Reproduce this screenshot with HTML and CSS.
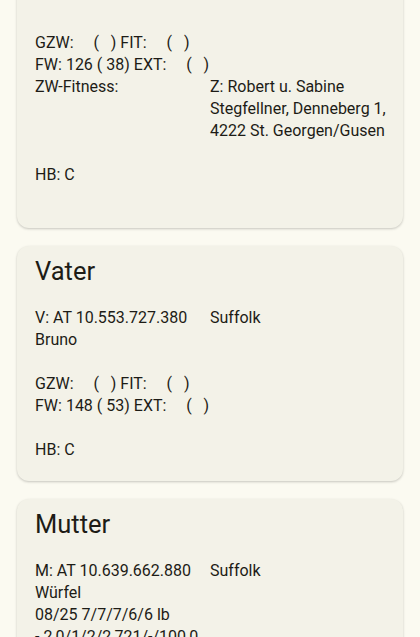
FILE: index.html
```html
<!DOCTYPE html>
<html lang="de">
<head>
  <meta charset="utf-8">
  <title>Tierdetails</title>
  <link rel="stylesheet" href="styles.css">
</head>
<body>

  <div class="list">

    <div class="card first">
      <div class="blank"></div>
      <div class="line">GZW:     (   ) FIT:     (   )</div>
      <div class="line">FW: 126 ( 38) EXT:     (   )</div>
      <div class="pair">
        <div class="line">ZW-Fitness:</div>
        <div class="wrap">Z: Robert u. Sabine Stegfellner, Denneberg 1, 4222 St. Georgen/Gusen</div>
      </div>
      <div class="blank"></div>
      <div class="line">HB: C</div>
      <div class="blank"></div>
    </div>

    <div class="card">
      <div class="title">Vater</div>
      <div class="pair">
        <div class="line">V: AT 10.553.727.380</div>
        <div class="line">Suffolk</div>
      </div>
      <div class="line">Bruno</div>
      <div class="blank"></div>
      <div class="line">GZW:     (   ) FIT:     (   )</div>
      <div class="line">FW: 148 ( 53) EXT:     (   )</div>
      <div class="blank"></div>
      <div class="line">HB: C</div>
    </div>

    <div class="card">
      <div class="title">Mutter</div>
      <div class="pair">
        <div class="line">M: AT 10.639.662.880</div>
        <div class="line">Suffolk</div>
      </div>
      <div class="line">Würfel</div>
      <div class="line">08/25 7/7/7/6/6 lb</div>
      <div class="line">- 2,0/1/2/2,721/-/100,0</div>
      <div class="blank"></div>
      <div class="line">HB: C</div>
    </div>

  </div>

</body>
</html>
```

FILE: styles.css
```css
html, body {
    margin: 0;
    height: 100%;
}

body {
    background: #fbfaf1;
    color: #1d1c16;
    font-family: Roboto, "Noto Sans", sans-serif;
    font-size: 16px;
    overflow: hidden;
}

.list {
    display: flex;
    flex-direction: column;
    gap: 18px;
    padding: 0 17px;
}

.card {
    background: #f3f2e8;
    border-radius: 12px;
    padding: 9px 13px 20px 18px;
    box-shadow: 0 1px 3px rgba(0, 0, 0, 0.14), 0 1px 2px rgba(0, 0, 0, 0.08);
}

.card.first {
    margin-top: -20px;
    padding-top: 30px;
    border-radius: 0 0 12px 12px;
}

.title {
    font-size: 25.5px;
    line-height: 32px;
    margin-bottom: 20px;
}

.line {
    line-height: 22px;
    white-space: pre;
}

.blank {
    height: 22px;
}

.pair {
    display: grid;
    grid-template-columns: 175px 1fr;
}

.wrap {
    line-height: 22px;
}
```
